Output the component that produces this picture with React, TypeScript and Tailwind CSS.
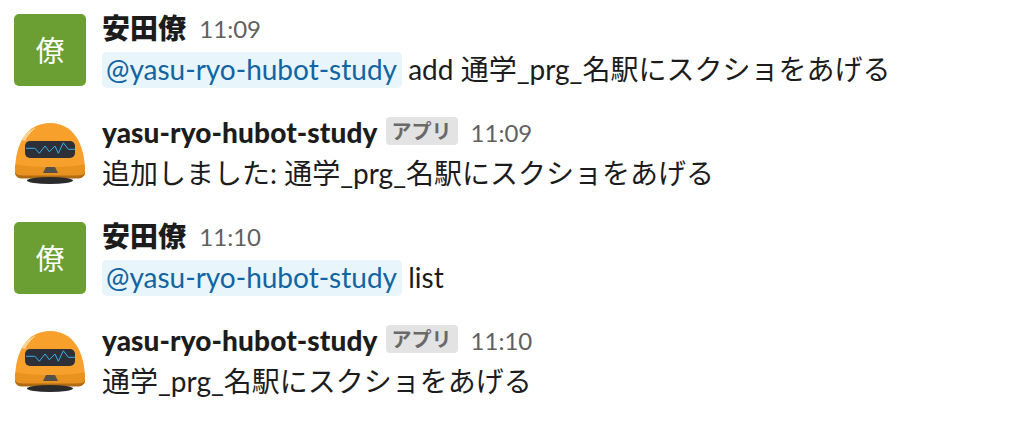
const font = "[font-family:Lato,'Noto_Sans_CJK_JP',sans-serif]";

function Robot() {
  return (
    <svg width="72" height="72" viewBox="0 0 72 72" className="shrink-0">
      <path d="M1 54 C1 24 14 5 36 5 C58 5 71 24 71 54 C71 58 68 60 64 60 L8 60 C4 60 1 58 1 54 Z" fill="#f8a02c" />
      <path d="M1.6 46 C10 50 62 50 70.4 46 C71 50 71 52 71 54 C71 58 68 60 64 60 L8 60 C4 60 1 58 1 54 C1 52 1 50 1.6 46 Z" fill="#e8921f" />
      <path d="M1 53 C1.5 57 4 57 9 57.5 L63 57.5 C68 57 70.5 57 71 53 C71 58 68 60.5 64 60.5 L8 60.5 C4 60.5 1 58 1 53 Z" fill="#b06c14" />
      <path d="M8 22 C11 16 15 12 22 9.5 C18 13 14 17 11 23 Z" fill="#fcd596" />
      <rect x="11" y="23" width="50" height="17" rx="5" fill="#2d3038" />
      <path d="M12 30.3 H21 L25.3 35.3 L31 28 L35.3 33.7 L41 28 L44.3 35.3 L49.3 24.7 L54.3 31.3 H61" fill="none" stroke="#36b0e6" strokeWidth="1" />
      <path d="M32 49 H41 L44 55 H29 Z" fill="#54504c" />
      <ellipse cx="36" cy="62.5" rx="23" ry="3.5" fill="#2b2b2b" />
    </svg>
  );
}

function Human() {
  return (
    <div className="flex h-[72px] w-[72px] shrink-0 items-center justify-center rounded-[5px] bg-[#6b9f33] text-[29px] leading-none text-white">
      僚
    </div>
  );
}

function Mention() {
  return (
    <span className="mr-[-1px] rounded-[5px] bg-[#e8f5fa] pb-[2px] pl-[4px] pr-[5px] text-[#1264a3]">@yasu-ryo-hubot-study</span>
  );
}

function Message({ bot, name, time, children }: { bot?: boolean; name: string; time: string; children: React.ReactNode }) {
  return (
    <div className="flex h-[104px] gap-4 px-[14px] pt-[14px]">
      {bot ? <Robot /> : <Human />}
      <div className="flex min-w-0 flex-col">
        <div className="flex h-[28px] items-center gap-[13px]">
          <span className="text-[28px] font-black leading-[30px] tracking-[0.1px] text-[#1d1c1d]">{name}</span>
          {bot && (
            <span className="mb-[2px] ml-[-5px] rounded-[4px] bg-[#e3e3e3] px-[6px] text-[20px] font-bold leading-[28px] text-[#696969]">アプリ</span>
          )}
          <span className="mt-[2px] text-[24px] leading-[30px] text-[#616061]">{time}</span>
        </div>
        <div className="mt-[9px] whitespace-nowrap text-[28px] leading-[36px] text-[#1d1c1d]">{children}</div>
      </div>
    </div>
  );
}

export default function App() {
  return (
    <div className={`h-[432px] w-[1026px] overflow-hidden bg-white ${font}`}>
      <Message name="安田僚" time="11:09">
        <Mention /> add 通学_prg_名駅にスクショをあげる
      </Message>
      <Message bot name="yasu-ryo-hubot-study" time="11:09">
        追加しました: 通学_prg_名駅にスクショをあげる
      </Message>
      <Message name="安田僚" time="11:10">
        <Mention /> list
      </Message>
      <Message bot name="yasu-ryo-hubot-study" time="11:10">
        通学_prg_名駅にスクショをあげる
      </Message>
    </div>
  );
}
